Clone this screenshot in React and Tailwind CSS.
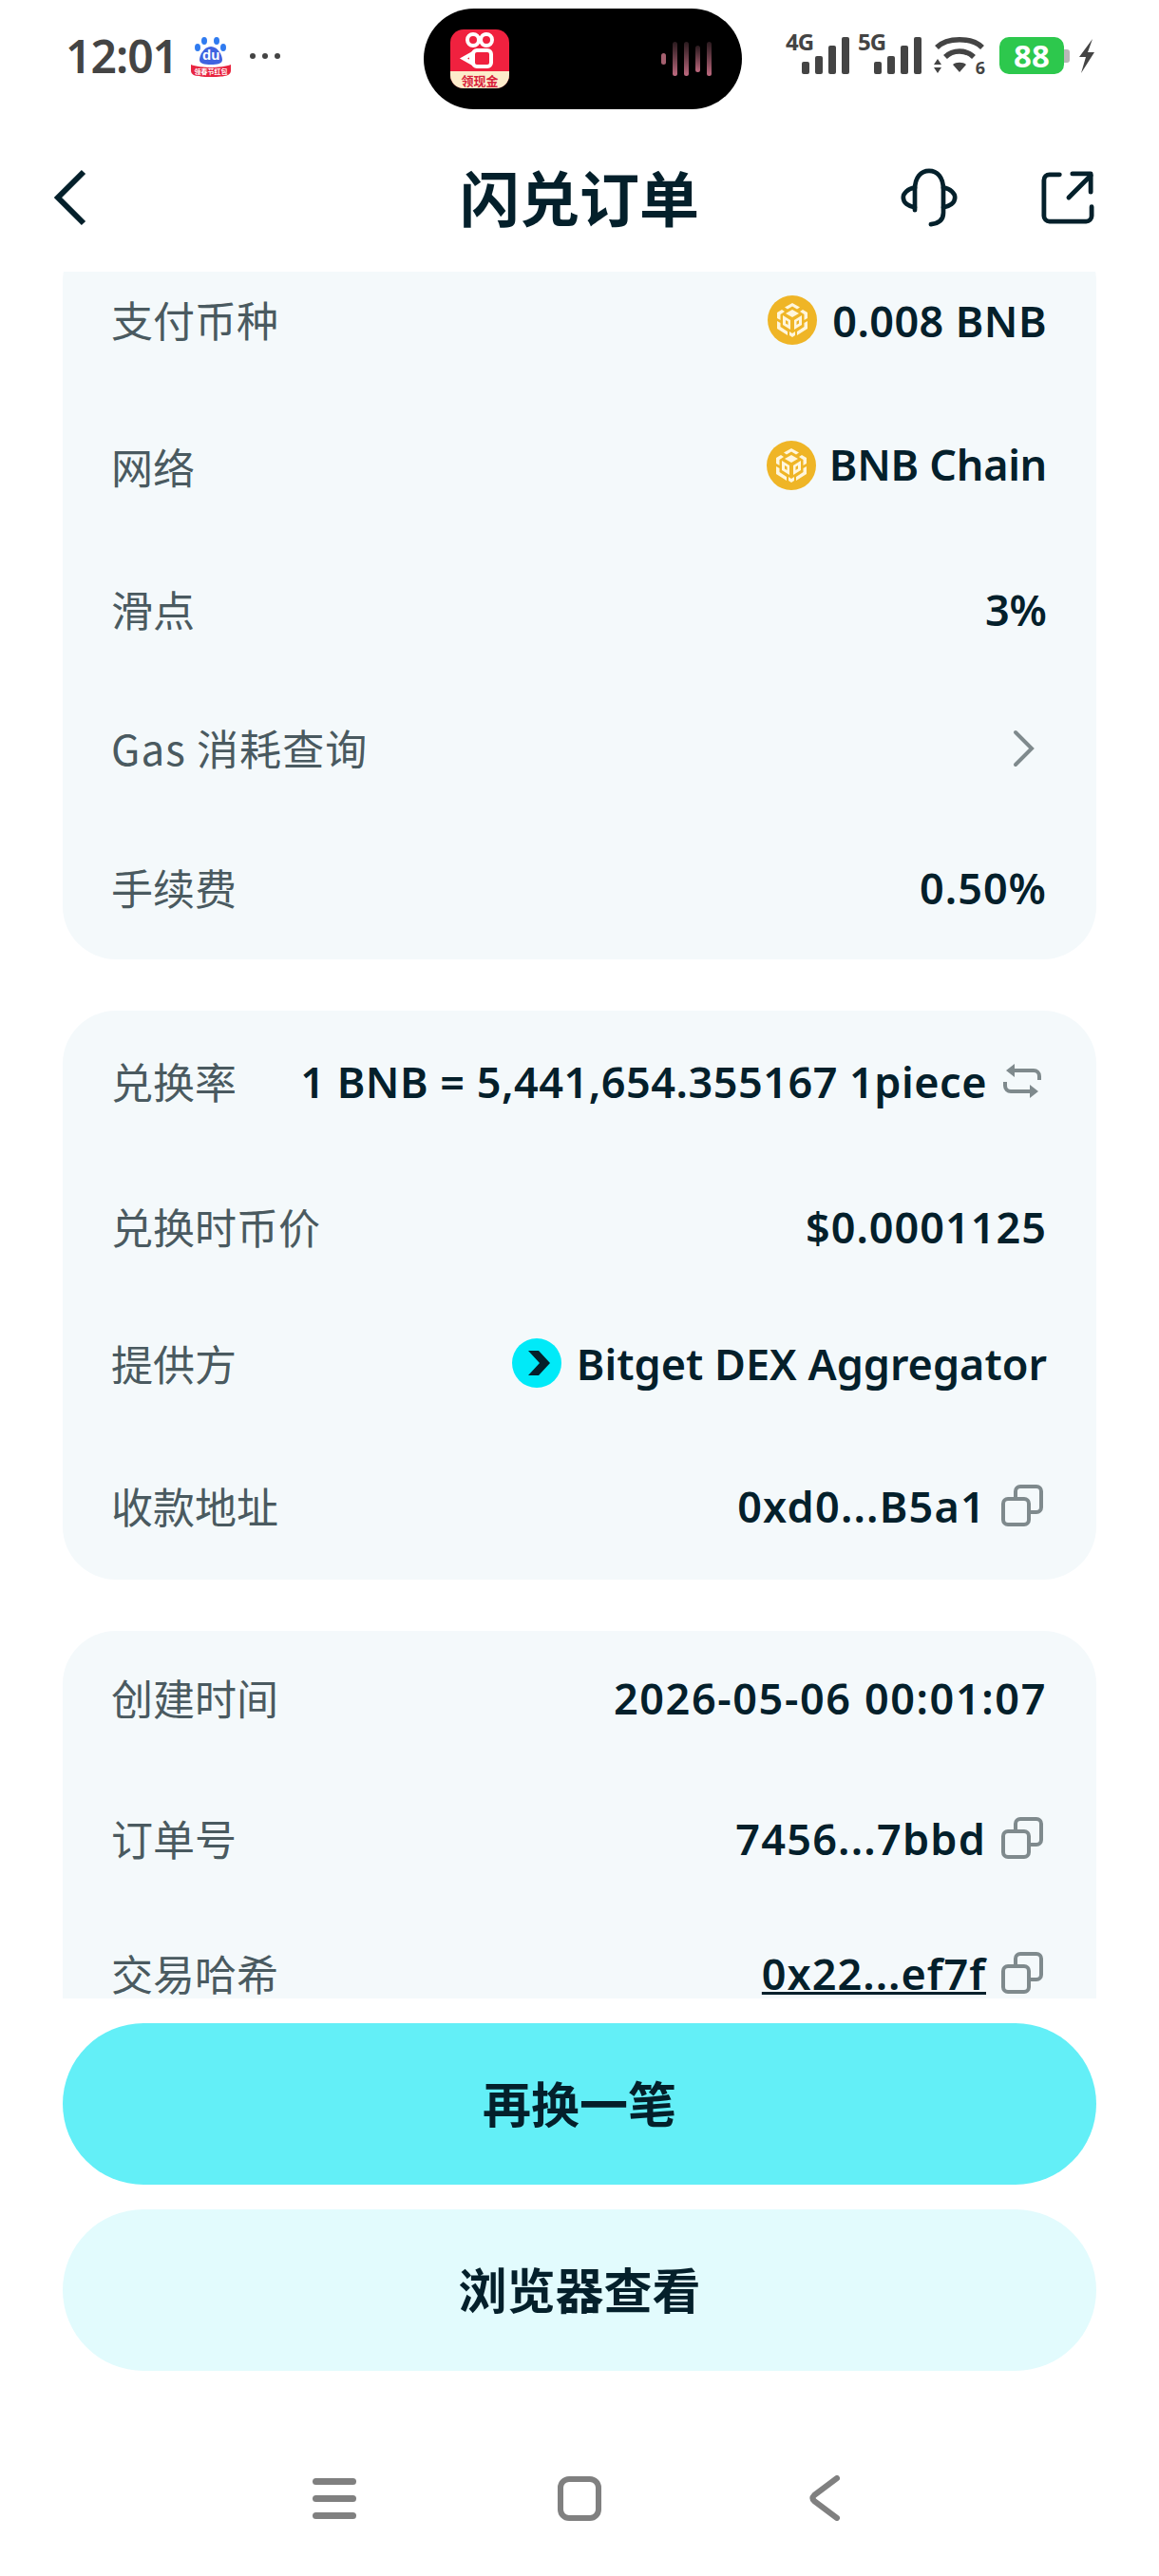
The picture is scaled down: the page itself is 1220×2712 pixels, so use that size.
import React from 'react';

const ink = 'text-[#04202b]';

// BNB coin: cube made of white blocks on the yellow disc
const BnbIcon = ({ className }) => (
  <svg viewBox="0 0 52 52" className={className}>
    <circle cx="26" cy="26" r="26" fill="#efb526" />
    <g fill="#fff6dc">
      <path d="M26 8 L34 12.5 L31 14.5 L26 11.5 L21 14.5 L18 12.5 Z" />
      <path d="M26 15 L33 19 L26 23 L19 19 Z" />
      <path d="M15 15 L18 17 L13.5 20 L13.5 26 L10 24 L10 18 Z" />
      <path d="M37 15 L34 17 L38.5 20 L38.5 26 L42 24 L42 18 Z" />
      <path d="M10 27 L13.5 29 L13.5 33 L21 38 L21 42 L10 35 Z" />
      <path d="M42 27 L38.5 29 L38.5 33 L31 38 L31 42 L42 35 Z" />
      <path d="M16 21 L24 26 L24 36 L16 31 Z" />
      <path d="M36 21 L28 26 L28 36 L36 31 Z" />
      <path d="M23 38 L26 40 L29 38 L29 42 L26 44 L23 42 Z" />
    </g>
    <g fill="#efb526">
      <path d="M19 26 L21.5 27.5 L21.5 31 L19 29.5 Z" />
      <path d="M33 26 L30.5 27.5 L30.5 31 L33 29.5 Z" />
    </g>
  </svg>
);

const BitgetIcon = () => (
  <svg viewBox="0 0 52 52" className="w-[52px] h-[52px] shrink-0">
    <circle cx="26" cy="26" r="26" fill="#00eaf8" />
    <path d="M17 13 L28 13 L40 26 L28 39 L17 39 L29 26 Z" fill="#04202b" />
  </svg>
);

const CopyIcon = () => (
  <svg viewBox="0 0 44 44" className="w-[44px] h-[44px] shrink-0" fill="none" stroke="#7f8a8d" strokeWidth="4">
    <rect x="2" y="15" width="27" height="27" rx="5" />
    <path d="M15 15 V7 A5 5 0 0 1 20 2 H37 A5 5 0 0 1 42 7 V24 A5 5 0 0 1 37 29 H29" />
  </svg>
);

const SwapIcon = () => (
  <svg viewBox="0 0 42 42" className="w-[42px] h-[42px] shrink-0" fill="none" stroke="#7f8a8d" strokeWidth="4">
    <path d="M13 10 H33 A6 6 0 0 1 39 16 V20" />
    <path d="M29 32 H9 A6 6 0 0 1 3 26 V22" />
    <path d="M13 3 L4 10 L13 17 Z" fill="#7f8a8d" stroke="none" />
    <path d="M29 25 L38 32 L29 39 Z" fill="#7f8a8d" stroke="none" />
  </svg>
);

const Signal = ({ label }) => (
  <div className="relative w-[67px] h-[44px]">
    <span className="absolute left-0 -top-[4px] font-['Noto_Sans'] font-bold text-[24px] leading-[28px] tracking-[-1px] text-[#444]">{label}</span>
    <div className="absolute right-0 bottom-0 flex items-end gap-[6px]">
      <div className="w-[8px] h-[13px] rounded-[2px] bg-[#444]" />
      <div className="w-[8px] h-[19px] rounded-[2px] bg-[#444]" />
      <div className="w-[8px] h-[30px] rounded-[2px] bg-[#444]" />
      <div className="w-[8px] h-[39px] rounded-[2px] bg-[#444]" />
    </div>
  </div>
);

const StatusBar = () => (
  <div className="relative h-[130px] shrink-0 flex items-start">
    <div className="flex items-center pl-[69px] pt-[36px] h-[82px]">
      <span className="font-['Noto_Sans'] font-semibold text-[48px] leading-none tracking-[-1px] text-[#444]">12:01</span>
      {/* baidu notification icon */}
      <div className="relative w-[42px] h-[46px] ml-[14px]">
        <svg viewBox="0 0 42 46" className="w-[42px] h-[46px]">
          <ellipse cx="14" cy="7" rx="3" ry="4" fill="#2f7bf0" />
          <ellipse cx="27" cy="7" rx="3" ry="4" fill="#2f7bf0" />
          <ellipse cx="7" cy="14" rx="3" ry="4" fill="#2f7bf0" />
          <ellipse cx="34" cy="14" rx="3" ry="4" fill="#2f7bf0" />
          <path d="M21 13 C28 13 33 22 33 27 C33 31 28 32 21 32 C14 32 9 31 9 27 C9 22 14 13 21 13 Z" fill="#3f63e0" />
          <path d="M0 32 C10 36 32 36 42 32 L42 38 C42 43 38 45 21 45 C4 45 0 43 0 38 Z" fill="#e8243f" />
        </svg>
        <span className="absolute left-[12px] top-[14px] font-['Liberation_Sans'] text-[15px] leading-[16px] font-bold text-white">du</span>
        <span className="absolute left-0 right-0 top-[35px] text-center font-['Noto_Sans_CJK_SC'] font-bold text-[7px] leading-[9px] text-white whitespace-nowrap">领春节红包</span>
      </div>
      <div className="flex items-center gap-[7px] ml-[20px]">
        <div className="w-[6px] h-[6px] rounded-full bg-[#444]" />
        <div className="w-[6px] h-[6px] rounded-full bg-[#444]" />
        <div className="w-[6px] h-[6px] rounded-full bg-[#444]" />
      </div>
    </div>

    {/* dynamic island */}
    <div className="absolute left-[446px] top-[9px] w-[335px] h-[106px] rounded-full bg-black flex items-center justify-between pl-[28px] pr-[32px]">
      <div className="relative w-[62px] h-[62px] rounded-[14px] overflow-hidden bg-[#f0213f]">
        <svg viewBox="0 0 62 62" className="absolute inset-0 w-[62px] h-[62px]" fill="none" stroke="#fff" strokeWidth="4">
          <circle cx="24" cy="11" r="6" />
          <circle cx="38" cy="11" r="6" />
          <rect x="24" y="22" width="19" height="17" rx="4" />
          <path d="M22 26 L14 30.5 L22 35 Z" />
        </svg>
        <div className="absolute left-0 right-0 bottom-0 h-[18px] bg-[#fdeccb] flex items-center justify-center">
          <span className="font-['Noto_Sans_CJK_SC'] font-bold text-[13px] leading-none text-[#d9203b] whitespace-nowrap">领现金</span>
        </div>
      </div>
      <div className="flex items-center gap-[7px]">
        <div className="w-[5px] h-[12px] rounded-full bg-[#a5606f]" />
        <div className="w-[5px] h-[36px] rounded-full bg-gradient-to-b from-[#2a1a1e] to-[#c06a80]" />
        <div className="w-[5px] h-[36px] rounded-full bg-gradient-to-b from-[#2a1a1e] to-[#c06a80]" />
        <div className="w-[5px] h-[28px] rounded-full bg-gradient-to-b from-[#2a1a1e] to-[#c06a80]" />
        <div className="w-[5px] h-[36px] rounded-full bg-gradient-to-b from-[#2a1a1e] to-[#c06a80]" />
      </div>
    </div>

    <div className="absolute left-[827px] top-[34px] flex items-end">
      <Signal label="4G" />
      <div className="ml-[9px]"><Signal label="5G" /></div>
      {/* wifi */}
      <div className="relative w-[54px] h-[39px] ml-[13px]">
        <svg viewBox="0 0 54 39" className="w-[54px] h-[39px]">
          <path d="M3 11 C14 0 40 0 51 11" fill="none" stroke="#444" strokeWidth="5.5" />
          <path d="M12 21 C20 13 34 13 42 21" fill="none" stroke="#444" strokeWidth="5.5" />
          <path d="M20 29 C23 26 31 26 34 29 L27 37 Z" fill="#444" />
          <path d="M4 23 L8 29 H0 Z M4 38 L8 32 H0 Z" fill="#444" />
        </svg>
        <span className="absolute right-0 bottom-[-2px] font-['Noto_Sans'] font-bold text-[18px] leading-[18px] text-[#444]">6</span>
      </div>
      {/* battery */}
      <div className="flex items-center ml-[15px]">
        <div className="w-[68px] h-[39px] rounded-[10px] bg-[#2dc84d] flex items-center justify-center">
          <span className="font-['Noto_Sans'] font-bold text-[33px] leading-none text-white">88</span>
        </div>
        <div className="w-[6px] h-[14px] rounded-r-[3px] bg-[#b8b8b8]" />
      </div>
      <svg viewBox="0 0 18 36" className="w-[18px] h-[36px] ml-[9px] mb-[1px]">
        <path d="M15 0 L1 19 H8 L3 36 L17 14 H10 Z" fill="#444" />
      </svg>
    </div>
  </div>
);

const Header = () => (
  <div className="relative h-[156px] shrink-0 flex items-center justify-center">
    <svg viewBox="0 0 36 60" className="absolute left-[56px] top-[48px] w-[36px] h-[60px]" fill="none" stroke="#04202b" strokeWidth="6">
      <path d="M32 3 L5 30 L32 57" />
    </svg>
    <h1 className={`-mt-[5px] font-['Noto_Sans_CJK_SC'] font-semibold text-[63px] leading-none ${ink}`}>闪兑订单</h1>
    <svg viewBox="0 0 64 66" className="absolute left-[948px] top-[47px] w-[60px] h-[62px]" fill="none" stroke="#04202b" strokeWidth="5" strokeLinecap="round">
      <path d="M16 47 V24 C16 10 23 3 32 3 C41 3 48 10 48 24 V50 C48 58 42 62 34 63" />
      <path d="M16 22 C8 23 3 28 3 33 C3 39 9 43 16 44" />
      <path d="M48 22 C56 23 61 28 61 33 C61 39 55 43 48 44" />
    </svg>
    <svg viewBox="0 0 58 60" className="absolute left-[1096px] top-[49px] w-[56px] h-[58px]" fill="none" stroke="#04202b" strokeWidth="5" strokeLinecap="round" strokeLinejoin="round">
      <path d="M20 5 H9 A6 6 0 0 0 3 11 V50 A6 6 0 0 0 9 56 H49 A6 6 0 0 0 55 50 V40" />
      <path d="M30 30 L54 6" />
      <path d="M34 4 H54 V24" />
    </svg>
  </div>
);

const Row = ({ label, h, labelClass = '', valueClass = '', children }) => (
  <div className={`flex items-center justify-between ${h}`}>
    <span className={`font-['Noto_Sans_CJK_SC'] text-[44px] leading-none text-[#4a5a60] whitespace-nowrap ${labelClass}`}>{label}</span>
    <div className={`flex items-center font-['Noto_Sans'] font-semibold text-[45px] leading-none ${ink} whitespace-nowrap ${valueClass}`}>
      {children}
    </div>
  </div>
);

const Card = ({ className, children }) => (
  <div className={`rounded-[56px] bg-[#f4f9fb] pl-[51px] pr-[52px] ${className}`}>{children}</div>
);

const App = () => (
  <div className="w-[1220px] h-[2712px] bg-white flex flex-col overflow-hidden">
    <StatusBar />
    <Header />

    {/* scrolled order details, clipped top and bottom */}
    <div className="h-[1818px] mx-[66px] overflow-hidden shrink-0">
      <div className="-mt-[46px] flex flex-col gap-[54px]">
        <Card className="h-[770px] pt-[20px]">
          <Row label="支付币种" h="h-[154px]" labelClass="-mt-[2px]">
            <BnbIcon className="w-[52px] h-[52px] mr-[16px]" />
            <span className="tracking-[0.4px]">0.008 BNB</span>
          </Row>
          <Row label="网络" h="h-[154px]" valueClass="-mt-[3px]">
            <BnbIcon className="w-[52px] h-[52px] mr-[14px]" />
            <span className="tracking-[-0.3px] -mt-[2px]">BNB Chain</span>
          </Row>
          <Row label="滑点" h="h-[147px]" labelClass="-mt-[2px]">3%</Row>
          <Row label="Gas 消耗查询" h="h-[146px]" labelClass="-mt-[3px] tracking-[1.1px]">
            <svg viewBox="0 0 24 40" className="w-[24px] h-[40px] mr-[12px]" fill="none" stroke="#7f8a8d" strokeWidth="4" strokeLinecap="round">
              <path d="M3 3 L20 20 L3 37" />
            </svg>
          </Row>
          <Row label="手续费" h="h-[146px]"><span className="tracking-[1px]">0.50%</span></Row>
        </Card>

        <Card className="h-[599px]">
          <Row label="兑换率" h="h-[148px]">
            <span className="tracking-[0.5px]">1 BNB = 5,441,654.355167 1piece</span>
            <span className="ml-[16px] mr-[5px]"><SwapIcon /></span>
          </Row>
          <Row label="兑换时币价" h="h-[158px]"><span className="tracking-[1px]">$0.0001125</span></Row>
          <Row label="提供方" h="h-[130px]">
            <BitgetIcon />
            <span className="ml-[16px]">Bitget DEX Aggregator</span>
          </Row>
          <Row label="收款地址" h="h-[170px]">
            <span className="tracking-[1.2px]">0xd0...B5a1</span>
            <span className="ml-[16px] mr-[4px]"><CopyIcon /></span>
          </Row>
        </Card>

        <Card className="h-[500px]">
          <Row label="创建时间" h="h-[140px]"><span className="tracking-[1.6px]">2026-05-06 00:01:07</span></Row>
          <Row label="订单号" h="h-[156px]">
            <span className="tracking-[1.2px]">7456...7bbd</span>
            <span className="ml-[16px] mr-[4px]"><CopyIcon /></span>
          </Row>
          <Row label="交易哈希" h="h-[128px]">
            <span className="underline decoration-[3px] underline-offset-[2px] tracking-[1px]">0x22...ef7f</span>
            <span className="ml-[16px] mr-[4px]"><CopyIcon /></span>
          </Row>
        </Card>
      </div>
    </div>

    <div className="mx-[66px] mt-[26px] flex flex-col gap-[26px]">
      <button className={`h-[170px] pb-[4px] rounded-full bg-[#63eff7] font-['Noto_Sans_CJK_SC'] font-semibold text-[51px] ${ink}`}>再换一笔</button>
      <button className={`h-[170px] pb-[4px] rounded-full bg-[#e2fbfd] font-['Noto_Sans_CJK_SC'] font-semibold text-[51px] ${ink}`}>浏览器查看</button>
    </div>

    {/* android nav bar */}
    <div className="mt-[110px] pl-[329px] flex items-center h-[48px]">
      <div className="flex flex-col gap-[11px]">
        <div className="w-[46px] h-[7px] rounded-full bg-[#808080]" />
        <div className="w-[46px] h-[7px] rounded-full bg-[#808080]" />
        <div className="w-[46px] h-[7px] rounded-full bg-[#808080]" />
      </div>
      <div className="ml-[212px] w-[46px] h-[47px] rounded-[12px] border-[6px] border-[#808080]" />
      <svg viewBox="0 0 33 48" className="ml-[219px] w-[33px] h-[48px]" fill="none" stroke="#808080" strokeWidth="6" strokeLinecap="round" strokeLinejoin="round">
        <path d="M29 3 L5 21 Q2 24 5 27 L29 45" />
      </svg>
    </div>
  </div>
);

export default App;
